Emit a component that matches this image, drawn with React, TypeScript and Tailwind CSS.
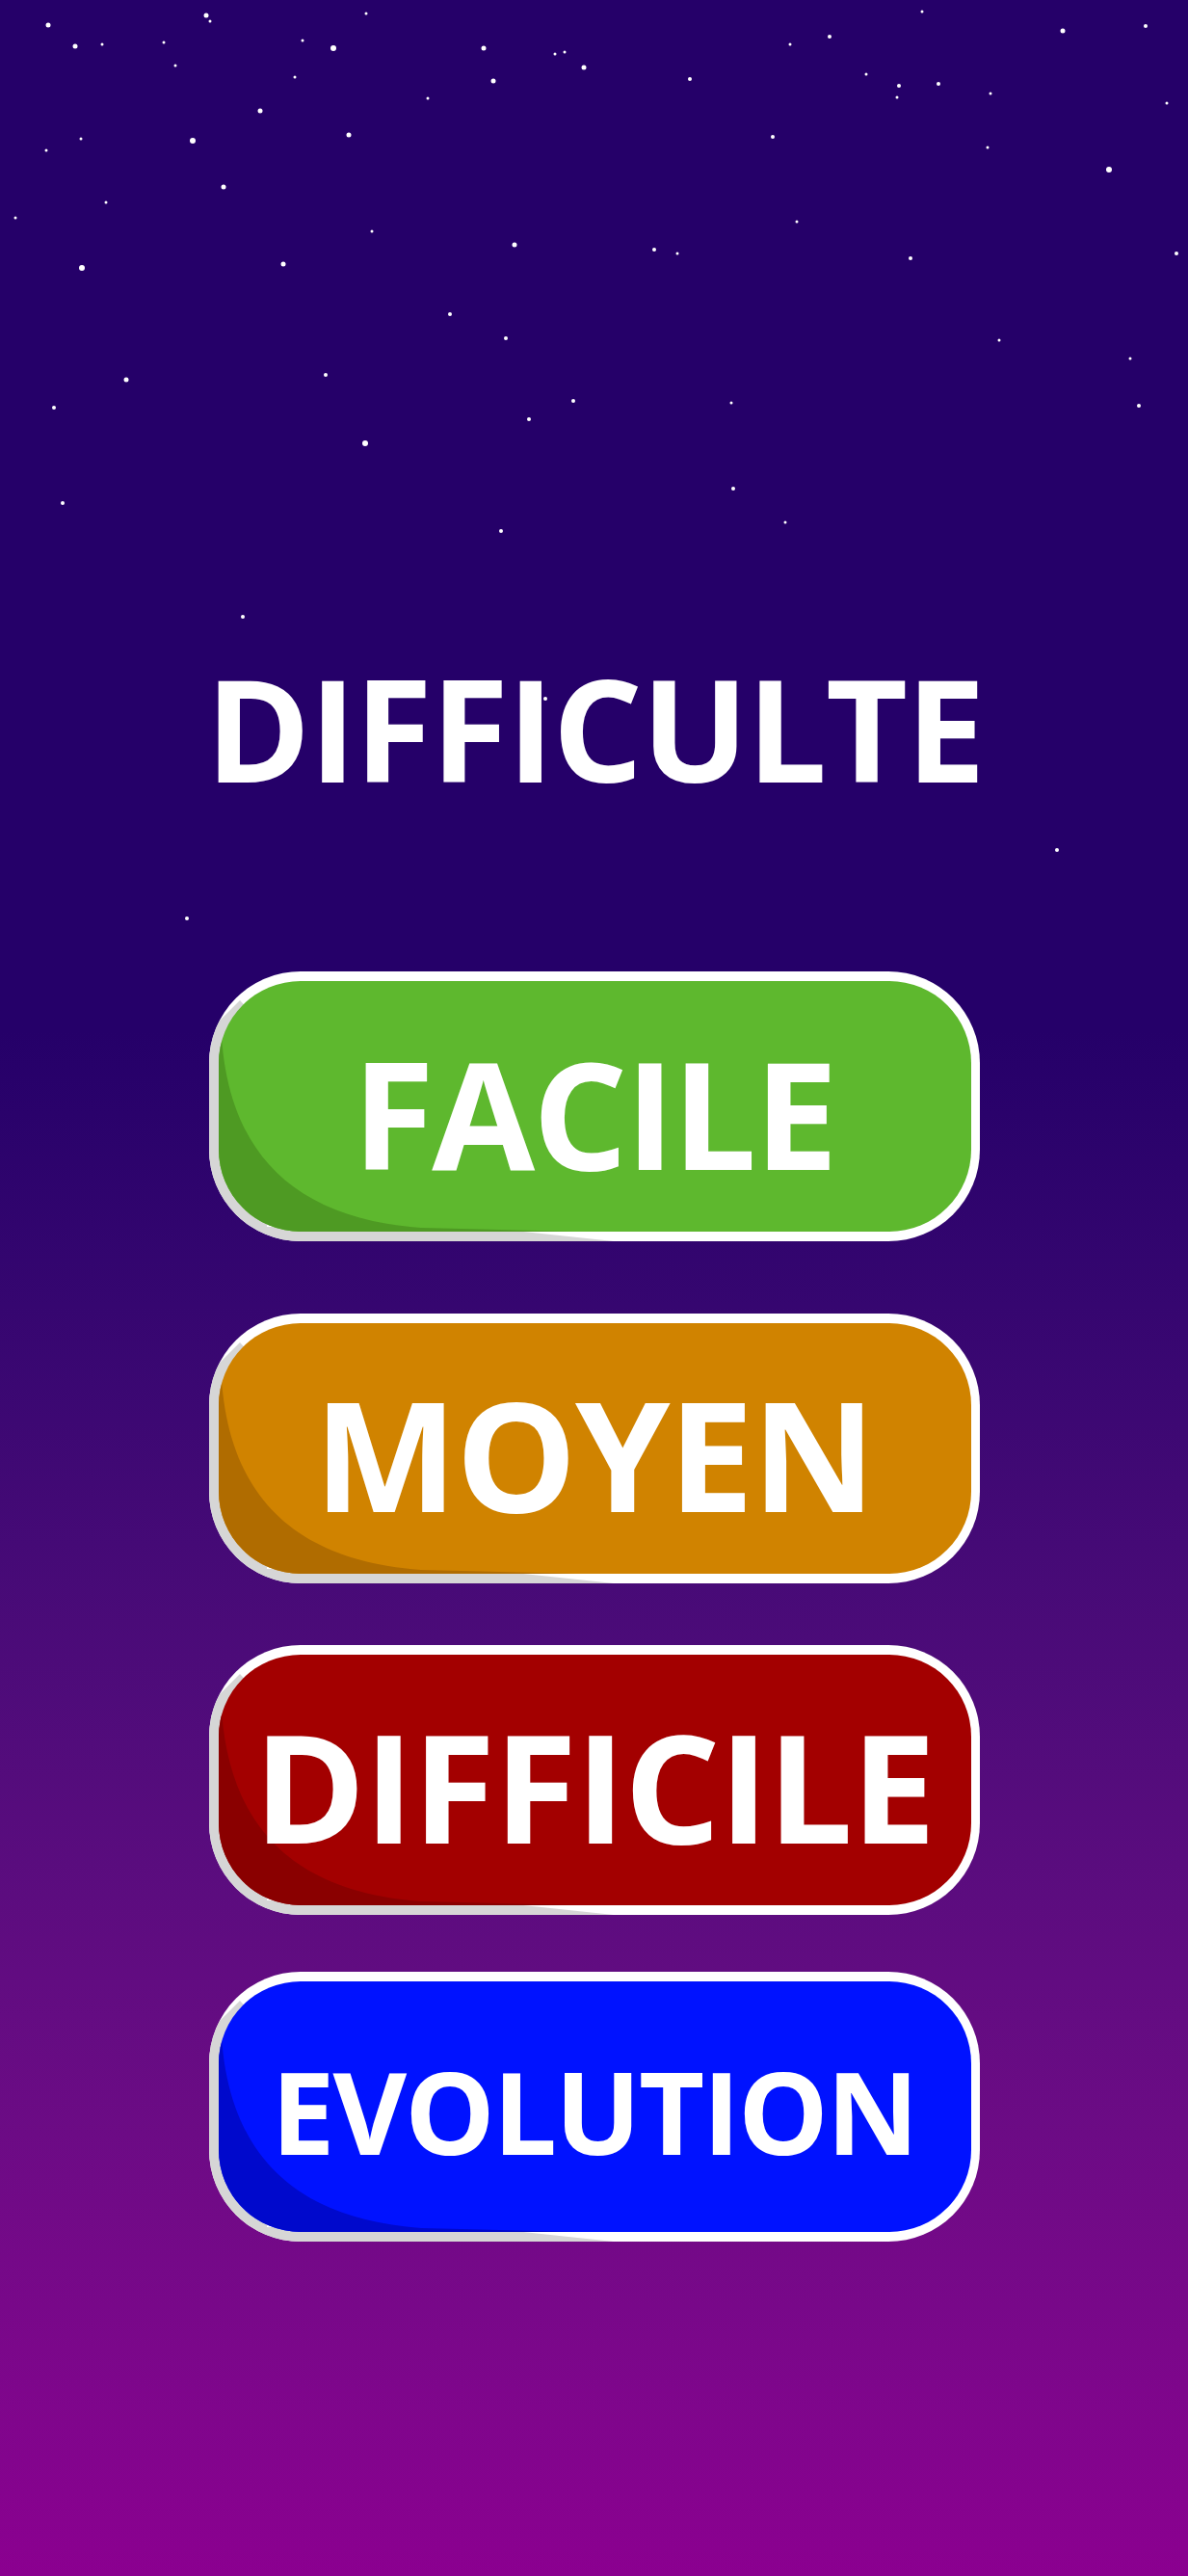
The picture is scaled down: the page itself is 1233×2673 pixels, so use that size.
const stars: [number, number, number][] = [
  [50, 26, 2.5], [214, 16, 2.5], [218, 22, 1.5], [380, 14, 1.5], [78, 48, 2.5],
  [106, 46, 1.5], [170, 44, 1.5], [314, 42, 1.5], [346, 50, 3], [502, 50, 2.5],
  [576, 56, 1.5], [586, 54, 1.5], [606, 70, 2.5], [182, 68, 1.5], [306, 80, 1.5],
  [512, 84, 2.5], [444, 102, 1.5], [270, 115, 2.5], [362, 140, 2.5], [84, 144, 1.5],
  [200, 146, 3], [48, 156, 1.5], [232, 194, 2.5], [110, 210, 1.5], [16, 226, 1.5],
  [386, 240, 1.5], [534, 254, 2.5], [85, 278, 3], [294, 274, 2.5], [716, 82, 2],
  [820, 46, 1.5], [861, 38, 2], [899, 77, 1.5], [933, 89, 2], [931, 101, 1.5],
  [974, 87, 2], [957, 12, 1.5], [1028, 97, 1.5], [1103, 32, 2.5], [1189, 27, 2],
  [1211, 107, 1.5], [802, 142, 2], [1025, 153, 1.5], [1151, 176, 3], [679, 259, 2],
  [703, 263, 1.5], [827, 230, 1.5], [945, 268, 2], [1221, 263, 2], [467, 326, 2],
  [525, 351, 2], [1037, 353, 1.5], [1173, 372, 1.5], [338, 389, 2], [131, 394, 2.5],
  [56, 423, 2], [595, 416, 2], [759, 418, 1.5], [1182, 421, 2], [549, 435, 2],
  [379, 460, 3], [761, 507, 2], [65, 522, 2], [520, 551, 2], [815, 542, 1.5],
  [252, 640, 2], [566, 725, 2], [1097, 882, 2], [194, 953, 2],
];

function StarField() {
  return (
    <svg
      className="pointer-events-none absolute left-0 top-0 h-[1000px] w-full"
      viewBox="0 0 1233 1000"
      preserveAspectRatio="none"
    >
      {stars.map(([x, y, r], i) => (
        <circle key={i} cx={x} cy={y} r={r} fill="#ffffff" />
      ))}
    </svg>
  );
}

type PillProps = {
  id: string;
  label: string;
  fill: string;
  shade: string;
  textClass: string;
  className: string;
};

function Pill({id, label, fill, shade, textClass, className}: PillProps) {
  return (
    <button className={`relative flex h-[280px] w-[800px] shrink-0 items-center justify-center ${className}`}>
      <svg className="absolute inset-0 h-full w-full" viewBox="0 0 800 280" preserveAspectRatio="none">
        <defs>
          <clipPath id={`out-${id}`}>
            <rect x="0" y="0" width="800" height="280" rx="95" />
          </clipPath>
          <clipPath id={`in-${id}`}>
            <rect x="10" y="10" width="781" height="260" rx="85" />
          </clipPath>
        </defs>
        <rect x="0" y="0" width="800" height="280" rx="95" fill="#ffffff" />
        <path
          clipPath={`url(#out-${id})`}
          d="M0 62 L32 30 L60 60 L60 265 L280 265 L420 280 L0 280 Z"
          fill="#d6d6d6"
        />
        <rect x="10" y="10" width="781" height="260" rx="85" fill={fill} />
        <path
          clipPath={`url(#in-${id})`}
          d="M12 40 C12 170 70 255 220 266 L420 271 L420 290 L0 290 L0 40 Z"
          fill={shade}
        />
      </svg>
      <span className={`relative pt-[10px] font-bold leading-none text-white ${textClass}`}>{label}</span>
    </button>
  );
}

export default function App() {
  return (
    <div className="relative min-h-[2673px] w-full overflow-hidden bg-linear-to-b from-[#250069] from-40% to-[#8b0090] font-['Open_Sans','Noto_Sans',sans-serif]">
      <StarField />
      <div className="relative flex flex-col items-center pt-[682px] pb-[300px]">
        <h1 className="h-[147px] pl-[2px] text-[147px] font-bold leading-none tracking-[-1.5px] text-white">
          DIFFICULTE
        </h1>
        <Pill
          id="facile"
          label="FACILE"
          fill="#5eb82e"
          shade="#4e9a23"
          textClass="text-[155px] tracking-[-2.5px]"
          className="mt-[179px]"
        />
        <Pill
          id="moyen"
          label="MOYEN"
          fill="#d08300"
          shade="#b06c00"
          textClass="text-[158px] tracking-[-1.8px]"
          className="mt-[75px]"
        />
        <Pill
          id="difficile"
          label="DIFFICILE"
          fill="#a30000"
          shade="#8a0000"
          textClass="text-[157px] tracking-[-1.6px]"
          className="mt-[64px]"
        />
        <Pill
          id="evolution"
          label="EVOLUTION"
          fill="#0012ff"
          shade="#0009cc"
          textClass="text-[118px] tracking-[-2.2px]"
          className="mt-[59px]"
        />
      </div>
    </div>
  );
}
